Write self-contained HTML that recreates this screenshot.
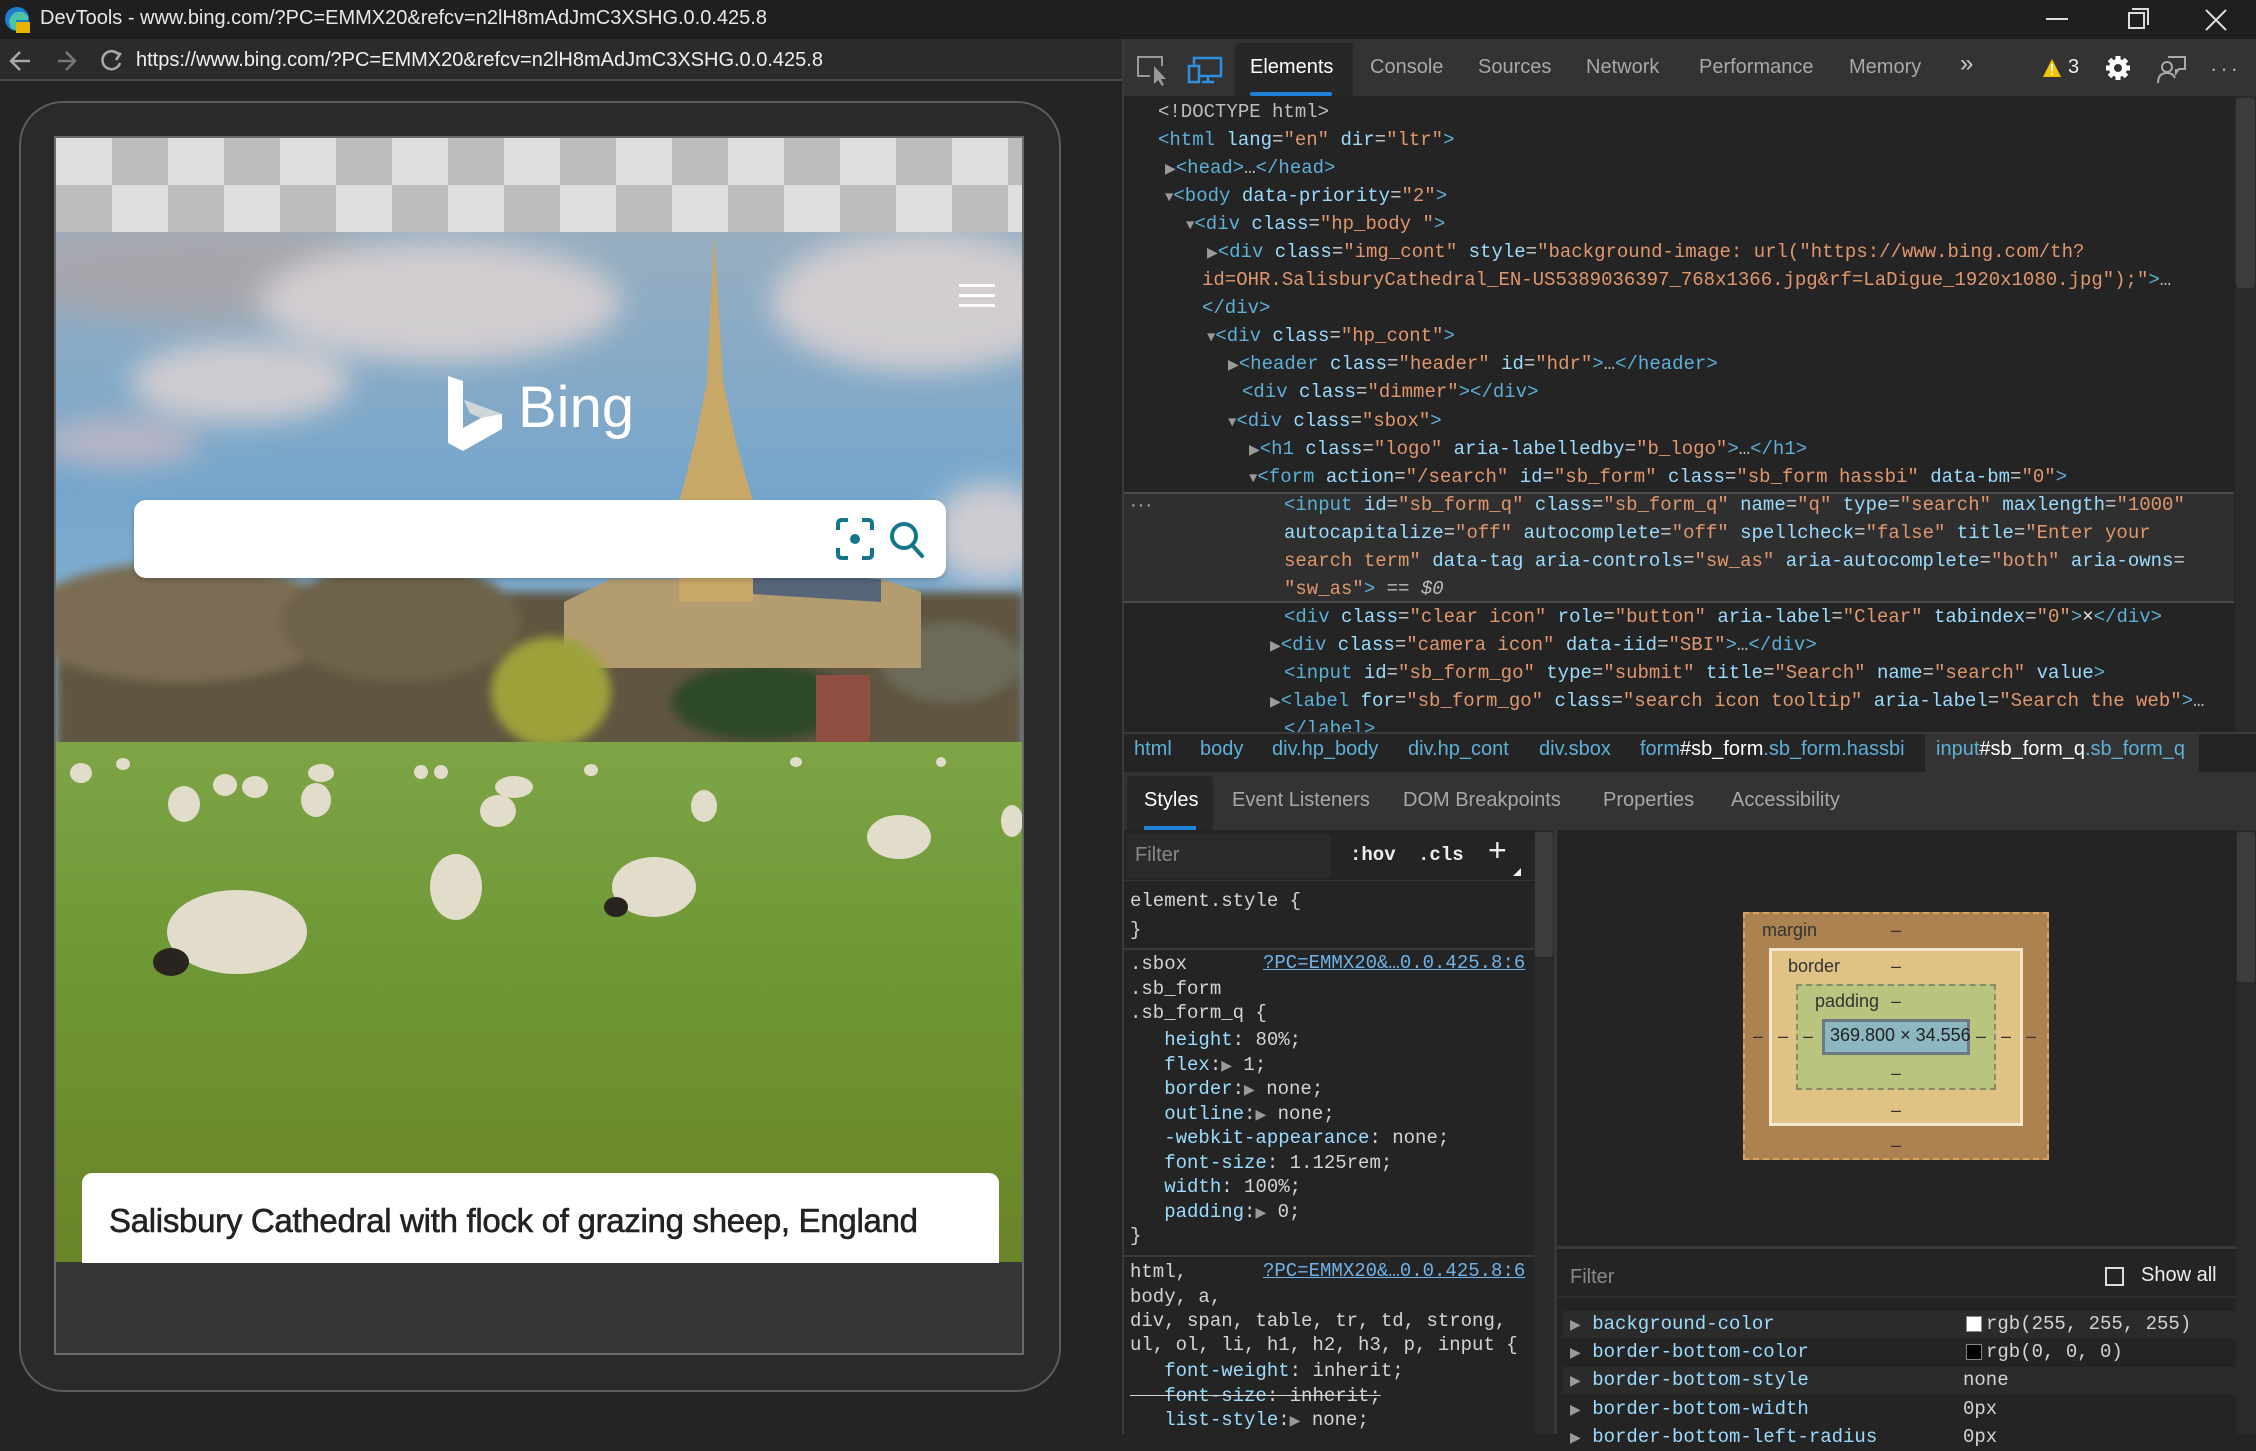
<!DOCTYPE html>
<html><head><meta charset="utf-8">
<style>
*{margin:0;padding:0;box-sizing:border-box}
body{width:2256px;height:1434px;background:#242424;position:relative;overflow:hidden;font-family:"Liberation Sans",sans-serif;color:#ccc}
.a{position:absolute;white-space:pre}
.m{font-family:"Liberation Mono",monospace;font-size:19px}
.t{color:#5db0d7}.n{color:#9bdcfe}.v{color:#e0976e}.g{color:#bdbdbd}.w{color:#e6e6e6}
.tri{color:#9a9a9a;font-size:14px}
.tab{position:absolute;top:56px;font-size:20px;color:#a8a8a8;white-space:nowrap}
.cl{position:absolute;left:0;font-family:"Liberation Mono",monospace;font-size:19px;color:#d4d4d4;white-space:pre;line-height:24px}
.lnk{color:#6fb3e9;text-decoration:underline}
.tree{white-space:nowrap}
.tree div{white-space:pre;height:28.06px}
</style></head><body>
<!-- title bar -->
<div class="a" style="left:0;top:0;width:2256px;height:39px;background:#1f1f1f"></div>
<svg class="a" style="left:4px;top:6px" width="28" height="28" viewBox="0 0 28 28"><circle cx="13" cy="13" r="12" fill="#1b7fd0"/><path d="M5 15 Q8 4 19 6 Q25 9 24 14 L12 14 Q12 20 22 20 Q14 27 7 22Z" fill="#4fc3a8"/><rect x="12" y="16" width="14" height="11" fill="#e8b400"/></svg>
<div class="a" style="left:40px;top:7px;font-size:20px;color:#e8e8e8">DevTools - www.bing.com/?PC=EMMX20&amp;refcv=n2lH8mAdJmC3XSHG.0.0.425.8</div>
<div class="a" style="left:2046px;top:18px;width:22px;height:2px;background:#ddd"></div>
<div class="a" style="left:2128px;top:12px;width:17px;height:17px;border:2px solid #ddd"></div>
<div class="a" style="left:2132px;top:8px;width:17px;height:17px;border-top:2px solid #ddd;border-right:2px solid #ddd"></div>
<svg class="a" style="left:2204px;top:8px" width="24" height="24"><path d="M2 2L22 22M22 2L2 22" stroke="#ddd" stroke-width="2"/></svg>
<!-- address bar -->
<div class="a" style="left:0;top:39px;width:1122px;height:42px;background:#2b2b2b;border-bottom:2px solid #4a4a4a"></div>
<svg class="a" style="left:8px;top:48px" width="130" height="26"><path d="M22 13H4M12 4L3 13L12 22" stroke="#aaa" stroke-width="2.5" fill="none"/><path d="M50 13H66M58 4L67 13L58 22" stroke="#777" stroke-width="2.5" fill="none"/><path d="M110 6A9 9 0 1 0 112 15" stroke="#aaa" stroke-width="2.5" fill="none"/><path d="M104 3L112 6L108 12" stroke="#aaa" stroke-width="2.5" fill="none"/></svg>
<div class="a" style="left:136px;top:49px;font-size:20px;color:#f0f0f0">https://www.bing.com/?PC=EMMX20&amp;refcv=n2lH8mAdJmC3XSHG.0.0.425.8</div>
<!-- device frame -->
<div class="a" style="left:19px;top:101px;width:1042px;height:1291px;border:2px solid #5c5c5c;border-radius:44px;background:#2a2a2a"></div>
<div class="a" style="left:54px;top:136px;width:970px;height:1219px;border:2px solid #6a6a6a;background:#373737;overflow:hidden">
 <div class="a" style="left:0;top:0;width:968px;height:47px;background:repeating-linear-gradient(90deg,#dedede 0 56px,#bdbdbd 56px 112px)"></div>
 <div class="a" style="left:0;top:47px;width:968px;height:47px;background:repeating-linear-gradient(90deg,#bdbdbd 0 56px,#dedede 56px 112px)"></div>
 <svg class="a" style="left:0;top:94px" width="968" height="1030" viewBox="55 230 968 1030">
  <defs>
   <linearGradient id="sky" x1="0" y1="0" x2="0" y2="1"><stop offset="0" stop-color="#98aec0"/><stop offset=".5" stop-color="#76a6cc"/><stop offset="1" stop-color="#8cb6d6"/></linearGradient>
   <linearGradient id="gr" x1="0" y1="0" x2="0" y2="1"><stop offset="0" stop-color="#7ea446"/><stop offset=".4" stop-color="#6f9836"/><stop offset="1" stop-color="#6a8428"/></linearGradient>
   <filter id="bl"><feGaussianBlur stdDeviation="14"/></filter>
   <filter id="bl2"><feGaussianBlur stdDeviation="5"/></filter>
  </defs>
  <rect x="55" y="230" width="968" height="520" fill="url(#sky)"/>
  <g filter="url(#bl)" fill="#ddd3d3" opacity=".85">
   <ellipse cx="200" cy="270" rx="200" ry="50" fill="#aaa6aa"/>
   <ellipse cx="440" cy="300" rx="180" ry="60"/>
   <ellipse cx="920" cy="300" rx="150" ry="70"/>
   <ellipse cx="240" cy="380" rx="110" ry="40"/>
   <ellipse cx="120" cy="440" rx="80" ry="25" fill="#c0b8c4"/>
   <ellipse cx="990" cy="530" rx="60" ry="50"/>
  </g>
  <!-- trees -->
  <g filter="url(#bl2)">
   <rect x="55" y="590" width="968" height="160" fill="#5e5540"/>
   <ellipse cx="180" cy="620" rx="160" ry="60" fill="#7a6d52"/>
   <ellipse cx="400" cy="620" rx="120" ry="60" fill="#6e624a"/>
   <ellipse cx="760" cy="700" rx="90" ry="40" fill="#2f4a2a"/>
   <ellipse cx="950" cy="660" rx="70" ry="40" fill="#6c6a58"/>
  </g>
  <!-- cathedral -->
  <polygon points="563,666 563,600 610,577 700,577 760,570 880,577 920,590 920,666" fill="#b39c70"/>
  <polygon points="720,590 760,570 880,577 880,600" fill="#56657a"/>
  <polygon points="713,233 706,380 694,440 678,500 678,600 752,600 752,500 735,440 722,380" fill="#c8a868"/>
  <rect x="815" y="673" width="54" height="68" fill="#8e4e42"/>
  <ellipse cx="550" cy="690" rx="60" ry="55" fill="#9ea23a" filter="url(#bl2)"/>
  <!-- grass -->
  <rect x="55" y="740" width="968" height="520" fill="url(#gr)"/>
  <g fill="#e2dccb">
   <ellipse cx="236" cy="930" rx="70" ry="42"/><ellipse cx="170" cy="960" rx="18" ry="14" fill="#2a2420"/>
   <ellipse cx="455" cy="885" rx="26" ry="33"/>
   <ellipse cx="653" cy="885" rx="42" ry="30"/><ellipse cx="615" cy="905" rx="12" ry="10" fill="#2a2420"/>
   <ellipse cx="898" cy="835" rx="32" ry="22"/>
   <ellipse cx="703" cy="804" rx="13" ry="16"/>
   <ellipse cx="497" cy="809" rx="18" ry="16"/>
   <ellipse cx="183" cy="802" rx="16" ry="18"/>
   <ellipse cx="315" cy="798" rx="15" ry="17"/>
   <ellipse cx="224" cy="783" rx="12" ry="11"/><ellipse cx="254" cy="785" rx="13" ry="11"/>
   <ellipse cx="320" cy="771" rx="13" ry="9"/><ellipse cx="513" cy="785" rx="19" ry="11"/>
   <ellipse cx="1011" cy="819" rx="11" ry="16"/><ellipse cx="80" cy="771" rx="11" ry="10"/>
   <ellipse cx="122" cy="762" rx="7" ry="6"/><ellipse cx="420" cy="770" rx="7" ry="7"/><ellipse cx="440" cy="770" rx="7" ry="7"/>
   <ellipse cx="590" cy="768" rx="7" ry="6"/><ellipse cx="795" cy="760" rx="6" ry="5"/><ellipse cx="940" cy="760" rx="5" ry="5"/>
  </g>
 </svg>
 <!-- hamburger -->
 <div class="a" style="left:903px;top:146px;width:36px;height:3px;background:#fff;box-shadow:0 10px 0 #fff,0 20px 0 #fff"></div>
 <!-- bing logo -->
 <svg class="a" style="left:392px;top:238px" width="56" height="76" viewBox="0 0 56 76"><path d="M0 0L15 5V52L33 42L22 37L16 24L54 38V53L15 75L0 67Z" fill="#fff"/><path d="M16 24L54 38L33 42L22 37Z" fill="#cfd6d8"/></svg>
 <div class="a" style="left:462px;top:236px;font-size:58px;color:#fff">Bing</div>
 <!-- search box -->
 <div class="a" style="left:78px;top:362px;width:812px;height:78px;background:#fff;border-radius:12px;box-shadow:0 2px 6px rgba(0,0,0,.2)"></div>
 <svg class="a" style="left:780px;top:380px" width="120" height="44" viewBox="0 0 120 44"><g stroke="#14768c" stroke-width="4" fill="none"><path d="M2 12V6Q2 2 6 2H12M26 2H32Q36 2 36 6V12M36 30V36Q36 40 32 40H26M12 40H6Q2 40 2 36V30"/><circle cx="68" cy="18" r="12"/><path d="M76 27L86 38" stroke-linecap="round"/></g><circle cx="19" cy="21" r="5" fill="#14768c"/></svg>
 <!-- caption -->
 <div class="a" style="left:26px;top:1035px;width:917px;height:90px;background:#fff;border-radius:10px 10px 0 0"></div>
 <div class="a" style="left:53px;top:1064px;font-size:33px;color:#222;-webkit-text-stroke:.6px #222;letter-spacing:-.3px">Salisbury Cathedral with flock of grazing sheep, England</div>
</div>

<!-- DEVTOOLS -->
<div class="a" style="left:1122px;top:39px;width:1134px;height:1395px;background:#242424;border-left:2px solid #3a3a3a"></div>
<div class="a" style="left:1124px;top:39px;width:1132px;height:57px;background:#333"></div>
<svg class="a" style="left:1136px;top:54px" width="110" height="32" viewBox="0 0 110 32"><path d="M14 22H2V3H26V12" stroke="#999" stroke-width="2" fill="none"/><path d="M18 12V30L22 26L26 32L28 31L25 25H30Z" fill="#999"/><g stroke="#2e8fe0" stroke-width="2.5" fill="none"><rect x="58" y="4" width="27" height="18"/><rect x="53" y="12" width="10" height="16" fill="#333"/><path d="M66 28H78M72 22V28"/></g></svg>
<div class="a" style="left:1235px;top:43px;width:118px;height:53px;background:#272727;border-radius:4px 4px 0 0"></div>
<div class="a" style="left:1250px;top:92px;width:82px;height:4px;background:#1e83d8;border-radius:2px"></div>
<div class="tab" style="left:1250px;color:#fff">Elements</div>
<div class="tab" style="left:1370px">Console</div>
<div class="tab" style="left:1478px">Sources</div>
<div class="tab" style="left:1586px">Network</div>
<div class="tab" style="left:1699px">Performance</div>
<div class="tab" style="left:1849px">Memory</div>
<div class="tab" style="left:1960px;font-size:24px;top:50px;color:#ccc">»</div>
<svg class="a" style="left:2042px;top:58px" width="20" height="20"><path d="M10 1L19 19H1Z" fill="#f3c400"/><rect x="9" y="6" width="2" height="7" fill="#fff"/><rect x="9" y="15" width="2" height="2" fill="#fff"/></svg>
<div class="tab" style="left:2068px;color:#eee">3</div>
<svg class="a" style="left:2105px;top:55px" width="26" height="26" viewBox="0 0 26 26"><g fill="#fff"><circle cx="13" cy="13" r="9"/><g stroke="#fff" stroke-width="5"><path d="M13 1V25M1 13H25M4.5 4.5L21.5 21.5M21.5 4.5L4.5 21.5"/></g></g><circle cx="13" cy="13" r="4" fill="#333"/></svg>
<svg class="a" style="left:2157px;top:54px" width="30" height="30" viewBox="0 0 30 30"><g stroke="#aaa" stroke-width="2" fill="none"><path d="M11 3H28V15H22L19 19V15"/><circle cx="10" cy="13" r="5"/><path d="M1 29Q1 19 10 19Q16 19 18 24"/></g></svg>
<div class="a" style="left:2210px;top:56px;font-size:22px;color:#aaa;letter-spacing:3px">···</div>

<!-- elements tree -->
<div class="a" style="left:1124px;top:492px;width:1110px;height:111px;background:#2f2f2f;border-top:2px solid #4b4b4b;border-bottom:2px solid #4b4b4b"></div>
<div class="a" style="left:1130px;top:494px;color:#aaa;font-size:20px;letter-spacing:1px">···</div>
<div class="a m tree" style="left:0;top:98px;line-height:28.06px;width:2234px;height:636px;overflow:hidden"><div style="padding-left:1158px" class="g">&lt;!DOCTYPE html&gt;</div><div style="padding-left:1158px"><span class="t">&lt;html</span> <span class="n">lang</span>=<span class="v">"en"</span> <span class="n">dir</span>=<span class="v">"ltr"</span><span class="t">&gt;</span></div><div style="padding-left:1165px"><span class="tri">▶</span><span class="t">&lt;head&gt;</span><span class="g">…</span><span class="t">&lt;/head&gt;</span></div><div style="padding-left:1165px"><span class="tri">▼</span><span class="t">&lt;body</span> <span class="n">data-priority</span>=<span class="v">"2"</span><span class="t">&gt;</span></div><div style="padding-left:1186px"><span class="tri">▼</span><span class="t">&lt;div</span> <span class="n">class</span>=<span class="v">"hp_body "</span><span class="t">&gt;</span></div><div style="padding-left:1207px"><span class="tri">▶</span><span class="t">&lt;div</span> <span class="n">class</span>=<span class="v">"img_cont"</span> <span class="n">style</span>=<span class="v">"background-image: url("https://www.bing.com/th?</span></div><div style="padding-left:1202px"><span class="v">id=OHR.SalisburyCathedral_EN-US5389036397_768x1366.jpg&amp;rf=LaDigue_1920x1080.jpg");"</span><span class="t">&gt;</span><span class="g">…</span></div><div style="padding-left:1202px"><span class="t">&lt;/div&gt;</span></div><div style="padding-left:1207px"><span class="tri">▼</span><span class="t">&lt;div</span> <span class="n">class</span>=<span class="v">"hp_cont"</span><span class="t">&gt;</span></div><div style="padding-left:1228px"><span class="tri">▶</span><span class="t">&lt;header</span> <span class="n">class</span>=<span class="v">"header"</span> <span class="n">id</span>=<span class="v">"hdr"</span><span class="t">&gt;</span><span class="g">…</span><span class="t">&lt;/header&gt;</span></div><div style="padding-left:1242px"><span class="t">&lt;div</span> <span class="n">class</span>=<span class="v">"dimmer"</span><span class="t">&gt;&lt;/div&gt;</span></div><div style="padding-left:1228px"><span class="tri">▼</span><span class="t">&lt;div</span> <span class="n">class</span>=<span class="v">"sbox"</span><span class="t">&gt;</span></div><div style="padding-left:1249px"><span class="tri">▶</span><span class="t">&lt;h1</span> <span class="n">class</span>=<span class="v">"logo"</span> <span class="n">aria-labelledby</span>=<span class="v">"b_logo"</span><span class="t">&gt;</span><span class="g">…</span><span class="t">&lt;/h1&gt;</span></div><div style="padding-left:1249px"><span class="tri">▼</span><span class="t">&lt;form</span> <span class="n">action</span>=<span class="v">"/search"</span> <span class="n">id</span>=<span class="v">"sb_form"</span> <span class="n">class</span>=<span class="v">"sb_form hassbi"</span> <span class="n">data-bm</span>=<span class="v">"0"</span><span class="t">&gt;</span></div><div style="padding-left:1284px"><span class="t">&lt;input</span> <span class="n">id</span>=<span class="v">"sb_form_q"</span> <span class="n">class</span>=<span class="v">"sb_form_q"</span> <span class="n">name</span>=<span class="v">"q"</span> <span class="n">type</span>=<span class="v">"search"</span> <span class="n">maxlength</span>=<span class="v">"1000"</span></div><div style="padding-left:1284px"><span class="n">autocapitalize</span>=<span class="v">"off"</span> <span class="n">autocomplete</span>=<span class="v">"off"</span> <span class="n">spellcheck</span>=<span class="v">"false"</span> <span class="n">title</span>=<span class="v">"Enter your</span></div><div style="padding-left:1284px"><span class="v">search term"</span> <span class="n">data-tag</span> <span class="n">aria-controls</span>=<span class="v">"sw_as"</span> <span class="n">aria-autocomplete</span>=<span class="v">"both"</span> <span class="n">aria-owns</span>=</div><div style="padding-left:1284px"><span class="v">"sw_as"</span><span class="t">&gt;</span> <span class="g">== <i>$0</i></span></div><div style="padding-left:1284px"><span class="t">&lt;div</span> <span class="n">class</span>=<span class="v">"clear icon"</span> <span class="n">role</span>=<span class="v">"button"</span> <span class="n">aria-label</span>=<span class="v">"Clear"</span> <span class="n">tabindex</span>=<span class="v">"0"</span><span class="t">&gt;</span><span class="w">×</span><span class="t">&lt;/div&gt;</span></div><div style="padding-left:1270px"><span class="tri">▶</span><span class="t">&lt;div</span> <span class="n">class</span>=<span class="v">"camera icon"</span> <span class="n">data-iid</span>=<span class="v">"SBI"</span><span class="t">&gt;</span><span class="g">…</span><span class="t">&lt;/div&gt;</span></div><div style="padding-left:1284px"><span class="t">&lt;input</span> <span class="n">id</span>=<span class="v">"sb_form_go"</span> <span class="n">type</span>=<span class="v">"submit"</span> <span class="n">title</span>=<span class="v">"Search"</span> <span class="n">name</span>=<span class="v">"search"</span> <span class="n">value</span><span class="t">&gt;</span></div><div style="padding-left:1270px"><span class="tri">▶</span><span class="t">&lt;label</span> <span class="n">for</span>=<span class="v">"sb_form_go"</span> <span class="n">class</span>=<span class="v">"search icon tooltip"</span> <span class="n">aria-label</span>=<span class="v">"Search the web"</span><span class="t">&gt;</span><span class="g">…</span></div><div style="padding-left:1284px"><span class="t">&lt;/label&gt;</span></div></div>
<!-- scrollbar elements -->
<div class="a" style="left:2235px;top:96px;width:21px;height:638px;background:#2a2a2a"></div>
<div class="a" style="left:2236px;top:98px;width:19px;height:190px;background:#3c3c3c;border-radius:4px"></div>

<!-- breadcrumb -->
<div class="a" style="left:1124px;top:732px;width:1132px;height:40px;background:#242424;border-top:2px solid #3a3a3a"></div>
<div class="a" style="left:1925px;top:734px;width:274px;height:38px;background:#333"></div>
<div class="a" style="left:1134px;top:738px;font-size:20px;color:#5db0d7">html</div>
<div class="a" style="left:1200px;top:738px;font-size:20px;color:#5db0d7">body</div>
<div class="a" style="left:1272px;top:738px;font-size:20px;color:#5db0d7">div.hp_body</div>
<div class="a" style="left:1408px;top:738px;font-size:20px;color:#5db0d7">div.hp_cont</div>
<div class="a" style="left:1539px;top:738px;font-size:20px;color:#5db0d7">div.sbox</div>
<div class="a" style="left:1640px;top:738px;font-size:20px;color:#5db0d7">form<span style="color:#fff">#sb_form</span>.sb_form.hassbi</div>
<div class="a" style="left:1936px;top:738px;font-size:20px;color:#5db0d7">input<span style="color:#fff">#sb_form_q</span>.sb_form_q</div>

<!-- sub tabs -->
<div class="a" style="left:1124px;top:772px;width:1132px;height:58px;background:#333"></div>
<div class="a" style="left:1127px;top:776px;width:86px;height:54px;background:#272727;border-radius:4px 4px 0 0"></div>
<div class="a" style="left:1144px;top:826px;width:52px;height:4px;background:#1e83d8"></div>
<div class="tab" style="left:1144px;top:789px;color:#fff">Styles</div>
<div class="tab" style="left:1232px;top:789px">Event Listeners</div>
<div class="tab" style="left:1403px;top:789px">DOM Breakpoints</div>
<div class="tab" style="left:1603px;top:789px">Properties</div>
<div class="tab" style="left:1731px;top:789px">Accessibility</div>

<!-- styles pane -->
<div class="a" style="left:1124px;top:830px;width:410px;height:604px;background:#242424"></div>
<div class="a" style="left:1127px;top:834px;width:204px;height:44px;background:#2b2b2b"></div>
<div class="a" style="left:1135px;top:844px;font-size:20px;color:#888">Filter</div>
<div class="a m" style="left:1350px;top:844px;color:#eee;font-weight:bold">:hov</div>
<div class="a m" style="left:1418px;top:844px;color:#eee;font-weight:bold">.cls</div>
<div class="a" style="left:1488px;top:832px;font-size:32px;color:#eee">+</div>
<div class="a" style="left:1513px;top:868px;width:0;height:0;border-left:8px solid transparent;border-bottom:8px solid #eee"></div>
<div class="a" style="left:1124px;top:880px;width:410px;height:1px;background:#333"></div>
<div class="a" style="left:1124px;top:948px;width:410px;height:2px;background:#3a3a3a"></div>
<div class="a" style="left:1124px;top:1255px;width:410px;height:2px;background:#3a3a3a"></div>
<div class="a" style="left:1534px;top:830px;width:20px;height:604px;background:#2a2a2a"></div>
<div class="a" style="left:1535px;top:832px;width:18px;height:125px;background:#3c3c3c;border-radius:3px"></div>
<div class="a" style="left:1554px;top:830px;width:3px;height:604px;background:#383838"></div>
<div style="position:absolute;left:1130px;top:0">
<div class="cl" style="top:889px">element.style {</div>
<div class="cl" style="top:918px">}</div>
<div class="cl" style="top:952px">.sbox</div>
<div class="cl" style="top:977px">.sb_form</div>
<div class="cl" style="top:1001px">.sb_form_q {</div>
<div class="cl" style="top:1028px">   <span class="n">height</span>: 80%;</div>
<div class="cl" style="top:1053px">   <span class="n">flex</span>:<span class="tri">▶</span> 1;</div>
<div class="cl" style="top:1077px">   <span class="n">border</span>:<span class="tri">▶</span> none;</div>
<div class="cl" style="top:1102px">   <span class="n">outline</span>:<span class="tri">▶</span> none;</div>
<div class="cl" style="top:1126px">   <span class="n">-webkit-appearance</span>: none;</div>
<div class="cl" style="top:1151px">   <span class="n">font-size</span>: 1.125rem;</div>
<div class="cl" style="top:1175px">   <span class="n">width</span>: 100%;</div>
<div class="cl" style="top:1200px">   <span class="n">padding</span>:<span class="tri">▶</span> 0;</div>
<div class="cl" style="top:1224px">}</div>
<div class="cl" style="top:1260px">html,</div>
<div class="cl" style="top:1285px">body, a,</div>
<div class="cl" style="top:1309px">div, span, table, tr, td, strong,</div>
<div class="cl" style="top:1333px">ul, ol, li, h1, h2, h3, p, input {</div>
<div class="cl" style="top:1359px">   <span class="n">font-weight</span>: inherit;</div>
<div class="cl" style="top:1384px;text-decoration:line-through">   <span class="n">font-size</span>: inherit;</div>
<div class="cl" style="top:1408px">   <span class="n">list-style</span>:<span class="tri">▶</span> none;</div>
</div>
<div class="a m lnk" style="left:1263px;top:952px">?PC=EMMX20&amp;…0.0.425.8:6</div>
<div class="a m lnk" style="left:1263px;top:1260px">?PC=EMMX20&amp;…0.0.425.8:6</div>

<!-- computed pane -->
<div class="a" style="left:2236px;top:830px;width:20px;height:604px;background:#2a2a2a"></div>
<div class="a" style="left:2237px;top:832px;width:18px;height:150px;background:#3c3c3c;border-radius:3px"></div>
<div class="a" style="left:1743px;top:912px;width:306px;height:248px;background:#ad8251;border:2px dashed #d8a560"></div>
<div class="a" style="left:1769px;top:948px;width:254px;height:178px;background:#e0c384;border:3px solid #f2e6cc"></div>
<div class="a" style="left:1796px;top:984px;width:200px;height:106px;background:#b9c47f;border:2px dashed #8a8a6a"></div>
<div class="a" style="left:1822px;top:1019px;width:148px;height:36px;background:#8cb6c0;border:3px solid #6a7a80"></div>
<div class="a" style="left:1830px;top:1025px;font-size:18px;color:#222">369.800 × 34.556</div>
<div class="a" style="left:1762px;top:920px;font-size:18px;color:#333">margin</div>
<div class="a" style="left:1788px;top:956px;font-size:18px;color:#333">border</div>
<div class="a" style="left:1815px;top:991px;font-size:18px;color:#333">padding</div>
<div class="a" style="left:1891px;top:920px;font-size:18px;color:#333">–</div>
<div class="a" style="left:1891px;top:956px;font-size:18px;color:#333">–</div>
<div class="a" style="left:1891px;top:991px;font-size:18px;color:#333">–</div>
<div class="a" style="left:1891px;top:1063px;font-size:18px;color:#333">–</div>
<div class="a" style="left:1891px;top:1100px;font-size:18px;color:#333">–</div>
<div class="a" style="left:1891px;top:1135px;font-size:18px;color:#333">–</div>
<div class="a" style="left:1753px;top:1026px;font-size:18px;color:#333">–   –   –</div>
<div class="a" style="left:1976px;top:1026px;font-size:18px;color:#333">–   –   –</div>
<div class="a" style="left:1557px;top:1246px;width:679px;height:3px;background:#3a3a3a"></div>
<div class="a" style="left:1570px;top:1266px;font-size:20px;color:#888">Filter</div>
<div class="a" style="left:2105px;top:1267px;width:19px;height:19px;border:2px solid #ddd"></div>
<div class="a" style="left:2141px;top:1264px;font-size:20px;color:#eee">Show all</div>
<div class="a" style="left:1557px;top:1296px;width:679px;height:2px;background:#2e2e2e"></div>
<div class="a" style="left:1562px;top:1311px;width:674px;height:27px;background:#2b2b2b"></div>
<div class="a" style="left:1562px;top:1367px;width:674px;height:27px;background:#2b2b2b"></div>
<div style="position:absolute;left:0;top:0">
<div class="cl" style="left:1570px;top:1312px"><span class="tri">▶</span> <span class="n">background-color</span></div>
<div class="cl" style="left:1570px;top:1340px"><span class="tri">▶</span> <span class="n">border-bottom-color</span></div>
<div class="cl" style="left:1570px;top:1368px"><span class="tri">▶</span> <span class="n">border-bottom-style</span></div>
<div class="cl" style="left:1570px;top:1397px"><span class="tri">▶</span> <span class="n">border-bottom-width</span></div>
<div class="cl" style="left:1570px;top:1425px"><span class="tri">▶</span> <span class="n">border-bottom-left-radius</span></div>
<div class="cl" style="left:1986px;top:1312px">rgb(255, 255, 255)</div>
<div class="cl" style="left:1986px;top:1340px">rgb(0, 0, 0)</div>
<div class="cl" style="left:1963px;top:1368px">none</div>
<div class="cl" style="left:1963px;top:1397px">0px</div>
<div class="cl" style="left:1963px;top:1425px">0px</div>
</div>
<div class="a" style="left:1966px;top:1316px;width:16px;height:16px;background:#fff;border:1px solid #888"></div>
<div class="a" style="left:1966px;top:1344px;width:16px;height:16px;background:#000;border:1px solid #888"></div>
</body></html>
